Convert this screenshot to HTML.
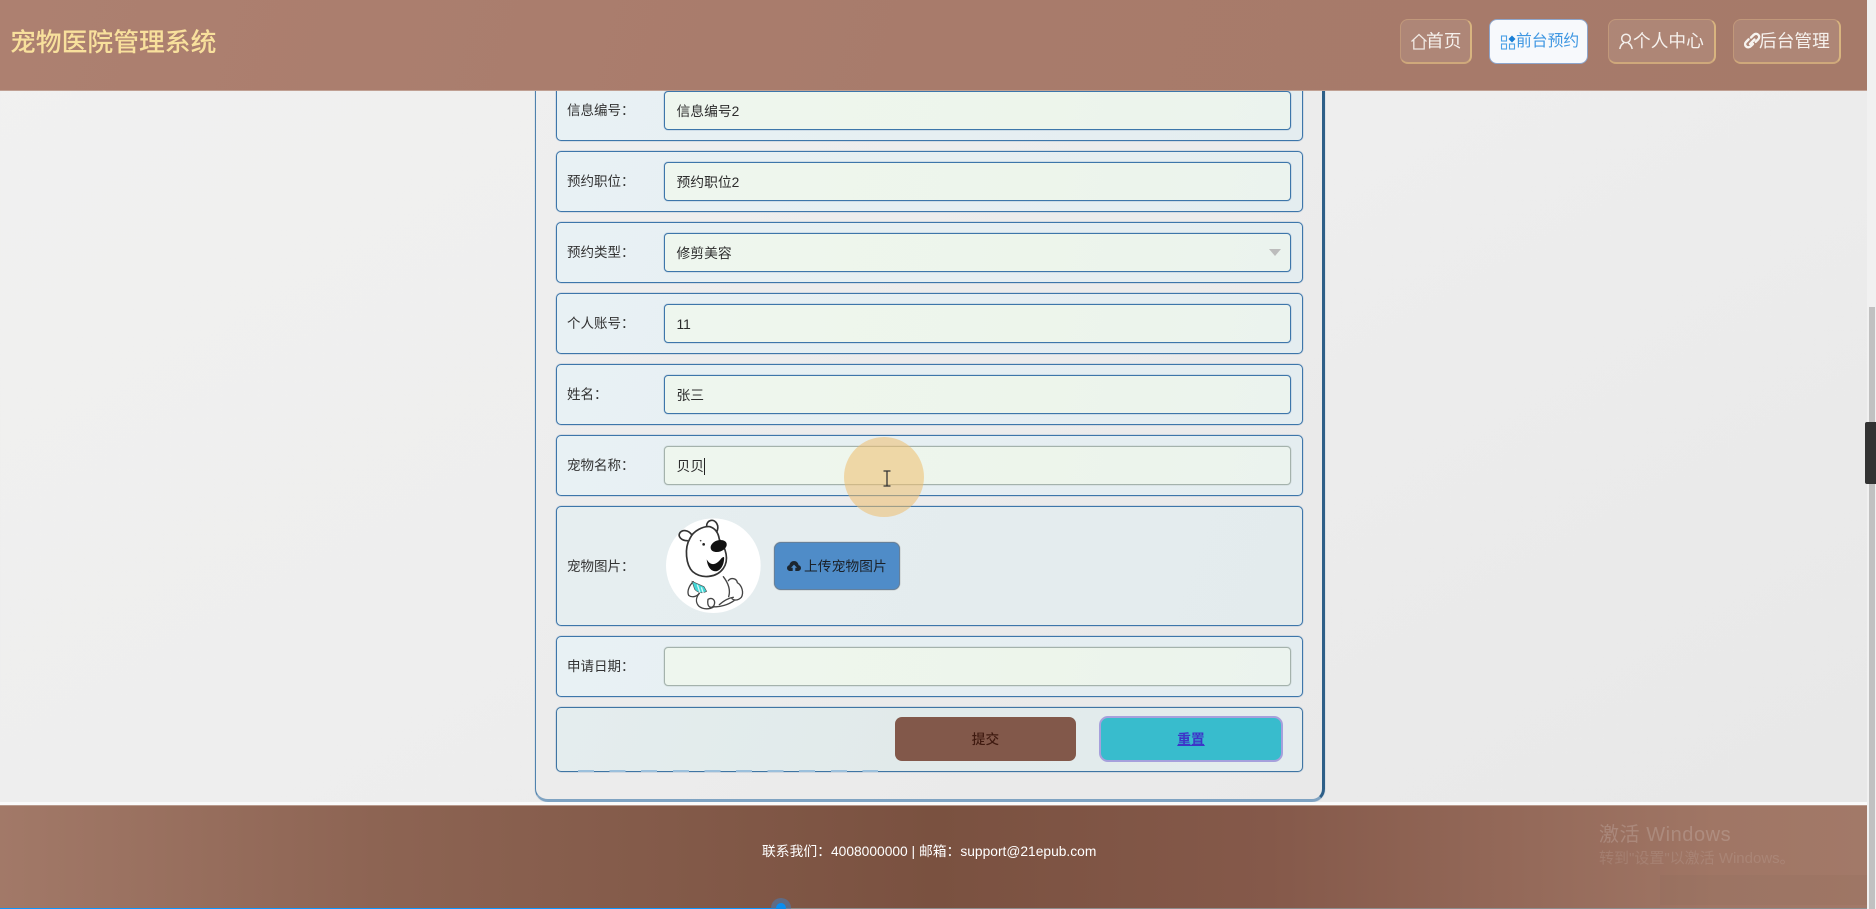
<!DOCTYPE html>
<html lang="zh">
<head>
<meta charset="utf-8">
<title>宠物医院管理系统</title>
<style>
*{box-sizing:border-box}
html,body{margin:0;padding:0;width:1876px;height:909px;overflow:hidden}
body{position:relative;background:linear-gradient(150deg,#f1f1f0 0%,#eeeeee 45%,#e7e7e7 100%);font-family:"Liberation Sans","Noto Sans CJK SC",sans-serif;color:#333}
.a{position:absolute}
.soft{filter:blur(.3px)}
#head{left:0;top:0;width:1867px;height:91px;background:linear-gradient(105deg,#ad8070 0%,#a87b6b 50%,#a67a69 100%);border-bottom:1px solid #c0a093;z-index:5}
#title{left:10px;top:24px;font-size:25.8px;line-height:38px;color:#f8e09c;white-space:nowrap;font-weight:500}
.nav{top:19px;height:45px;border-radius:8px;background:rgba(255,255,255,.09);border:1px solid rgba(222,180,130,.4);border-right:2px solid #d8b47f;border-bottom:2px solid #cfa87b;color:#f6f1ed;font-size:17.7px;line-height:43px;white-space:nowrap}
.nav span{position:absolute;top:0}
.nav svg{position:absolute;left:0;top:0}
#n2{background:#f7f9fc;border:1px solid #8ea6cc;color:#3f97e2;font-size:15.8px;line-height:44px}
#box{left:535px;top:40px;width:790px;height:762px;border:1px solid #4f82ad;border-right:3px solid #2e5f88;border-bottom:3px solid #7fa3c2;border-radius:0 0 13px 13px;background:linear-gradient(135deg,#efefef,#e9e9e9);box-shadow:0 0 1px rgba(70,120,170,.6)}
.row{left:556px;width:747px;border:1px solid #3d76aa;border-radius:5px;background:linear-gradient(110deg,#e8f1f4,#e6eff2 50%,#e4edf0);box-shadow:0 0 1px rgba(60,110,165,.9)}
.lab{left:567px;font-size:13.5px;line-height:20px;color:#333;white-space:nowrap}
.inp{left:664px;width:627px;height:39px;border:1px solid #3d76aa;border-radius:4px;background:linear-gradient(100deg,#eef6ee,#edf5eb 60%,#ebf3ee);font-size:13.8px;line-height:39px;color:#2c2c2c;padding-left:11.5px;white-space:nowrap;box-shadow:0 0 1px rgba(60,110,165,.9)}
.g{border-color:#a4b2ac;box-shadow:0 0 1px rgba(140,155,150,.9)}
#up{left:774px;top:542px;width:126px;height:48px;border-radius:7px;background:#4f8cc8;border:1px solid #64809c;box-shadow:0 0 1px #777}
#sub{left:895px;top:717px;width:181px;height:44px;border-radius:7px;background:#82584a;color:#3f1a10;text-align:center;font-size:13.7px;line-height:46px;font-weight:500}
#res{left:1099px;top:716px;width:184px;height:46px;border-radius:9px;background:#38bccd;border:2px solid #a6a0dc;color:#3d35c8;text-align:center;font-size:13.7px;line-height:44px;font-weight:700;text-decoration:underline}
#dash{left:578px;top:770px;width:300px;height:2px;background:repeating-linear-gradient(90deg,#9cc0dc 0 16px,transparent 16px 31.6px)}
#foot{left:0;top:805px;width:1867px;height:104px;background:linear-gradient(90deg,#a27968 0%,#8d6453 20%,#7a5140 50%,#85594a 68%,#a07665 92%,#a27968 100%);border-top:1px solid #b89a8d}
#ft{left:762px;top:842px;font-size:13.8px;line-height:20px;color:#fff;white-space:nowrap}
</style>
</head>
<body>
<div class="a" id="box"></div>

<div class="a row" style="top:80px;height:61px"></div>
<div class="a row" style="top:151px;height:61px"></div>
<div class="a row" style="top:222px;height:61px"></div>
<div class="a row" style="top:293px;height:61px"></div>
<div class="a row" style="top:364px;height:61px"></div>
<div class="a row" style="top:435px;height:61px"></div>
<div class="a row" style="top:506px;height:120px;background:linear-gradient(110deg,#e6eef0,#e3ebed)"></div>
<div class="a row" style="top:636px;height:61px"></div>
<div class="a row" style="top:707px;height:65px;background:linear-gradient(110deg,#e4edee,#e1eaea 50%,#e4ecee);border-color:#3f75a3"></div>

<div class="soft">
<div class="a lab" style="top:101px">信息编号：</div>
<div class="a lab" style="top:172px">预约职位：</div>
<div class="a lab" style="top:243px">预约类型：</div>
<div class="a lab" style="top:314px">个人账号：</div>
<div class="a lab" style="top:385px">姓名：</div>
<div class="a lab" style="top:456px">宠物名称：</div>
<div class="a lab" style="top:557px">宠物图片：</div>
<div class="a lab" style="top:657px">申请日期：</div>

<div class="a inp" style="top:91px">信息编号2</div>
<div class="a inp" style="top:162px">预约职位2</div>
<div class="a inp" style="top:233px">修剪美容</div>
<div class="a inp" style="top:304px">11</div>
<div class="a inp" style="top:375px">张三</div>
<div class="a inp g" style="top:446px">贝贝<span style="display:inline-block;width:1px;height:17px;background:#222;vertical-align:-4px"></span></div>
<div class="a inp g" style="top:647px"></div>
</div>

<svg class="a" style="left:1269px;top:249px" width="12" height="7" viewBox="0 0 12 7"><path d="M0 0H12L6 7Z" fill="#bcbcbc"/></svg>

<svg class="a" style="left:660px;top:510px" width="120" height="110" viewBox="0 0 360 330">
<circle cx="160" cy="167" r="142" fill="#fff"/>
<g fill="none" stroke="#444" stroke-width="4" stroke-linecap="round" stroke-linejoin="round">
<path d="M118 250C108 262 106 276 116 288C130 300 150 298 162 290C180 292 205 284 222 272"/>
<path d="M205 212C212 202 230 204 232 218C246 226 252 248 244 262C234 272 222 272 216 266"/>
<path d="M190 200C204 218 212 240 206 260"/>
<path d="M144 268C158 260 168 272 162 286C154 298 140 292 144 268Z"/>
<path d="M178 284C194 270 206 264 220 262"/>
<path d="M100 215C88 226 80 244 86 256C96 264 110 260 118 250"/>
</g>
<g fill="none" stroke="#333" stroke-width="5" stroke-linecap="round" stroke-linejoin="round">
<path d="M82 92C65 92 52 80 60 68C68 58 85 60 95 74"/>
<path d="M140 48C140 30 160 25 170 40C176 50 174 60 168 70"/>
<path fill="#fff" d="M90 85C100 62 130 48 150 50C165 55 175 68 178 88C198 115 208 150 190 175C170 203 125 208 98 185C78 165 72 115 90 85Z"/>
</g>
<ellipse cx="176" cy="108" rx="25" ry="17" fill="#111" transform="rotate(-20 176 108)"/>
<circle cx="131" cy="103" r="4" fill="#222"/><circle cx="122" cy="92" r="2.500" fill="#444"/>
<path d="M140 148C150 165 165 170 184 145C190 140 194 138 192 150C190 172 175 190 158 182C148 177 142 165 140 148Z" fill="#111"/>
<path d="M96 214L132 230L140 244C128 252 112 248 104 238Z" fill="#42d6d6" stroke="#555" stroke-width="2"/>
<path d="M112 224L120 248M124 232L130 250" stroke="#d8f8f8" stroke-width="4"/>
</svg>

<div class="a" id="up"></div>
<svg class="a" style="left:787px;top:560px" width="14" height="12" viewBox="0 0 14 12"><path d="M3.200 11C1.400 11 0 9.700 0 8C0 6.500 1 5.300 2.400 5.100C2.800 2.700 4.700 1 7 1C9.300 1 11.200 2.700 11.600 5.100C13 5.300 14 6.500 14 8C14 9.700 12.600 11 10.800 11H8.300V7.800H10L7 4.600L4 7.800H5.700V11Z" fill="#1c2630"/></svg>
<div class="a soft" style="left:804px;top:557px;font-size:13.8px;line-height:20px;color:#1a2028;white-space:nowrap">上传宠物图片</div>

<div class="a soft" id="sub">提交</div>
<div class="a soft" id="res">重置</div>
<div class="a" id="dash"></div>

<div class="a" style="left:844px;top:437px;width:80px;height:80px;border-radius:50%;background:rgba(238,190,110,.55);z-index:3"></div>
<svg class="a" style="left:882px;top:470px;z-index:4" width="10" height="17" viewBox="0 0 10 17"><path d="M1.500 1H8.500M1.500 16H8.500M5 1V16" stroke="#333" stroke-width="1.300" fill="none"/></svg>

<div class="a" style="left:0;top:802px;width:1867px;height:3px;background:#fafafa"></div>
<div class="a" id="foot"></div>
<div class="a soft" id="ft">联系我们：4008000000 | 邮箱：support@21epub.com</div>
<div class="a soft" style="left:1599px;top:823px;font-size:20px;line-height:24px;color:rgba(235,235,235,.2);white-space:nowrap;letter-spacing:.55px">激活 Windows</div>
<div class="a soft" style="left:1599px;top:849px;font-size:15px;line-height:20px;color:rgba(235,235,235,.12);white-space:nowrap">转到"设置"以激活 Windows。</div>
<div class="a" style="left:1660px;top:875px;width:207px;height:30px;background:rgba(110,85,75,.06)"></div>

<div class="a" style="left:781px;top:908px;width:1086px;height:1px;background:#8e8e8e"></div>
<div class="a" style="left:0;top:908px;width:781px;height:1px;background:#0a97ff"></div>
<div class="a" style="left:771px;top:898px;width:20px;height:20px;border-radius:50%;background:rgba(70,125,185,.55)"></div>
<div class="a" style="left:776px;top:903px;width:10px;height:10px;border-radius:50%;background:#0a8df0"></div>

<div class="a" id="head">
<div class="a soft" id="title">宠物医院管理系统</div>

<div class="a nav" style="left:1400px;width:72px">
<svg width="20" height="44" viewBox="0 0 20 44" style="left:8px"><path d="M2.500 21.500L10 14.500L17.500 21.500M4.800 20V29H15.200V20" fill="none" stroke="#f0e8e2" stroke-width="1.300"/></svg>
<span class="soft" style="left:25px">首页</span></div>

<div class="a nav" id="n2" style="left:1489px;width:99px">
<svg width="18" height="44" viewBox="0 0 18 44" style="left:10px"><g fill="none" stroke="#4aa0e6" stroke-width="1.100"><rect x="1.500" y="16" width="5" height="5"/><rect x="1.500" y="24" width="5" height="5"/><rect x="9.500" y="24" width="5" height="5"/></g><path d="M12 15.500L15.500 19L12 22.500L8.500 19Z" fill="#1b7fd6"/></svg>
<span class="soft" style="left:26px">前台预约</span></div>

<div class="a nav" style="left:1608px;width:108px">
<svg width="16" height="44" viewBox="0 0 16 44" style="left:9px"><circle cx="8" cy="18.500" r="4.300" fill="none" stroke="#f3eeea" stroke-width="1.500"/><path d="M1.800 29C2.500 25.500 4.500 23.500 6 23M14.200 29C13.500 25.500 11.500 23.500 10 23" fill="none" stroke="#f3eeea" stroke-width="1.500"/></svg>
<span class="soft" style="left:24px">个人中心</span></div>

<div class="a nav" style="left:1733px;width:108px">
<svg width="18" height="44" viewBox="0 0 18 44" style="left:9px"><g fill="none" stroke="#f7f4f0" stroke-width="2.400" stroke-linecap="round"><path d="M8 17.500L10.500 15C12 13.500 14 13.500 15.300 14.800C16.500 16 16.500 18 15.100 19.400L12.700 21.800"/><path d="M10 24L7.800 26.200C6.300 27.700 4.300 27.700 3 26.400C1.800 25.200 1.800 23.200 3.200 21.800L5.600 19.400"/><path d="M7 24L11.500 19.500"/></g></svg>
<span class="soft" style="left:25px">后台管理</span></div>
</div>

<div class="a" style="left:1867px;top:0;width:9px;height:909px;background:#f1f1f1"></div>
<div class="a" style="left:1869px;top:307px;width:6px;height:602px;background:#c1c1c1"></div>
<div class="a" style="left:1865px;top:422px;width:11px;height:62px;background:#333;border-radius:2px 0 0 2px"></div>
</body>
</html>
